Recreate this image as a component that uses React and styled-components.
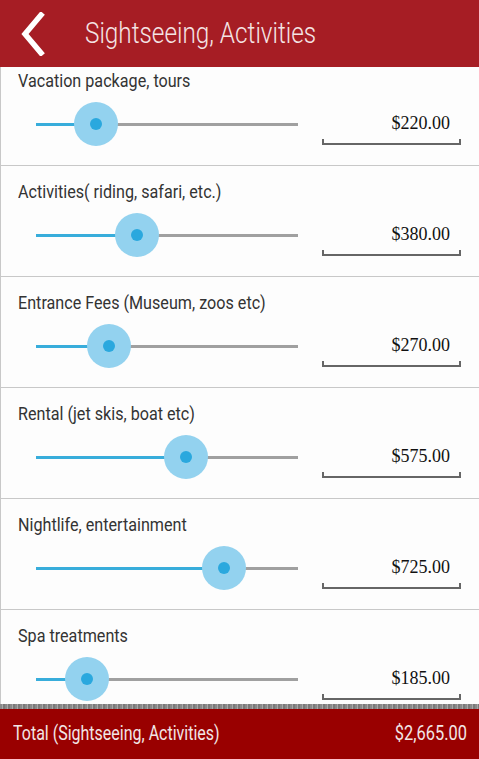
import React from 'react';
import styled, { createGlobalStyle } from 'styled-components';

const GlobalStyle = createGlobalStyle`
  html, body {
    margin: 0;
    padding: 0;
    background: #fff;
  }
  body {
    font-family: Roboto, "Liberation Sans", sans-serif;
  }
`

const Screen = styled.div`
  width: 479px;
  height: 759px;
  display: flex;
  flex-direction: column;
  overflow: hidden;
  background: #fdfdfd;
`

const Header = styled.div`
  height: 67px;
  flex-shrink: 0;
  background: #a61d24;
  display: flex;
  align-items: center;
  color: #fff;
`

const BackButton = styled.div`
  width: 85px;
  height: 67px;
  display: flex;
  align-items: center;
  padding-left: 20px;
  box-sizing: border-box;
`

const Condensed = styled.span`
  display: inline-block;
  white-space: nowrap;
  transform: scaleX(${p => p.$sx || 0.8});
  transform-origin: ${p => p.$origin || 'left'} center;
`

const Title = styled.div`
  font-size: 30px;
  font-weight: 300;
  color: #f4e4e4;
  margin-top: -2px;
`

const Scroll = styled.div`
  flex-grow: 1;
  overflow: hidden;
`

const List = styled.div`
  margin-top: -12px;
`

const Row = styled.div`
  height: 111px;
  box-sizing: border-box;
  border-left: 1px solid #c8c8c8;
  border-bottom: 1px solid #c8c8c8;
  display: flex;
  flex-direction: column;
  padding: 14px 0 0 17px;
`

const Label = styled.div`
  font-size: 19px;
  color: #333;
  height: 24px;
  line-height: 24px;
`

const Controls = styled.div`
  display: flex;
  align-items: flex-start;
`

const SliderTrack = styled.div`
  position: relative;
  margin: 30px 0 0 18px;
  width: 262px;
  height: 3px;
  background: #a0a0a0;
`

const SliderFill = styled.div`
  position: absolute;
  left: 0;
  top: 0;
  height: 3px;
  background: #38addb;
`

const Thumb = styled.div`
  position: absolute;
  top: 1px;
  width: 44px;
  height: 44px;
  margin-left: -22px;
  margin-top: -22px;
  border-radius: 50%;
  background: #93d2ef;
  display: flex;
  align-items: center;
  justify-content: center;
  &::after {
    content: '';
    width: 12px;
    height: 12px;
    border-radius: 50%;
    background: #2aa8de;
  }
`

const ValueCol = styled.div`
  margin: 18px 0 0 24px;
  width: 139px;
  display: flex;
  flex-direction: column;
`

const ValueText = styled.div`
  font-family: "Liberation Serif", "Times New Roman", serif;
  font-size: 18px;
  color: #111;
  text-align: right;
  padding-right: 11px;
  line-height: 24px;
`

const Bracket = styled.div`
  margin-top: 4px;
  height: 6px;
  box-sizing: border-box;
  border: 2px solid #666;
  border-top: none;
`

const Footer = styled.div`
  flex-shrink: 0;
  height: 55px;
  display: flex;
  flex-direction: column;
`

const Shadow = styled.div`
  height: 5px;
  background: repeating-linear-gradient(90deg, #8a8a8a 0 2px, #a8a8a8 2px 3px, #7a7a7a 3px 5px);
`

const TotalBar = styled.div`
  flex-grow: 1;
  background: #990000;
  display: flex;
  align-items: center;
  justify-content: space-between;
  padding: 0 12px 2px 13px;
  color: #f2e6e6;
  font-size: 20px;
`

const items = [
  { label: 'Vacation package, tours', value: '$220.00', pos: 60 },
  { label: 'Activities( riding, safari, etc.)', value: '$380.00', pos: 101 },
  { label: 'Entrance Fees (Museum, zoos etc)', value: '$270.00', pos: 73 },
  { label: 'Rental (jet skis, boat etc)', value: '$575.00', pos: 150 },
  { label: 'Nightlife, entertainment', value: '$725.00', pos: 188 },
  { label: 'Spa treatments', value: '$185.00', pos: 51 },
]

function App() {
  return (
    <>
      <GlobalStyle />
      <Screen>
        <Header>
          <BackButton>
            <svg width="26" height="44" viewBox="0 0 26 44">
              <polyline points="21,3 5,22 21,41" fill="none" stroke="#fff" strokeWidth="5.5" strokeLinecap="square" strokeLinejoin="miter" />
            </svg>
          </BackButton>
          <Title><Condensed $sx={0.81}>Sightseeing, Activities</Condensed></Title>
        </Header>
        <Scroll>
          <List>
            {items.map((item, i) => (
              <Row key={i}>
                <Label><Condensed $sx={0.85}>{item.label}</Condensed></Label>
                <Controls>
                  <SliderTrack>
                    <SliderFill style={{ width: item.pos }} />
                    <Thumb style={{ left: item.pos }} />
                  </SliderTrack>
                  <ValueCol>
                    <ValueText>{item.value}</ValueText>
                    <Bracket />
                  </ValueCol>
                </Controls>
              </Row>
            ))}
          </List>
        </Scroll>
        <Footer>
          <Shadow />
          <TotalBar>
            <Condensed $sx={0.8}>Total (Sightseeing, Activities)</Condensed>
            <Condensed $sx={0.82} $origin="right">$2,665.00</Condensed>
          </TotalBar>
        </Footer>
      </Screen>
    </>
  );
}

export default App;
